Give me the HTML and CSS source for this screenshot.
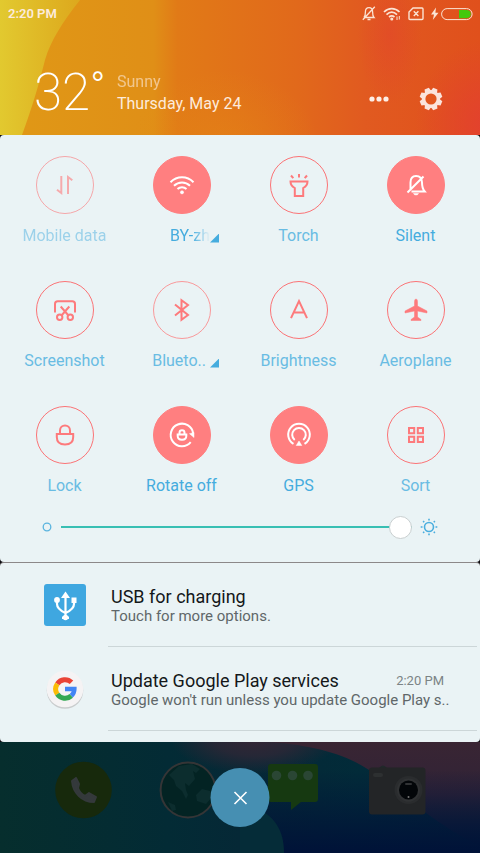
FILE: index.html
```html
<!DOCTYPE html>
<html lang="en">
<head>
<meta charset="utf-8">
<meta name="viewport" content="width=device-width, initial-scale=1">
<title>Notification shade</title>
<link rel="stylesheet" href="styles.css">
</head>
<body>
<div class="shade">
  <header class="header">
    <svg class="wallpaper" viewBox="0 0 480 135" preserveAspectRatio="none" aria-hidden="true">
      <defs>
        <linearGradient id="warm" x1="0" y1="0" x2="1" y2="0">
          <stop offset="0" stop-color="#e09916"/><stop offset=".32" stop-color="#e08f17"/>
          <stop offset=".37" stop-color="#e17a17"/><stop offset=".62" stop-color="#e1691b"/>
          <stop offset=".76" stop-color="#e15a20"/><stop offset="1" stop-color="#e0501c"/>
        </linearGradient>
        <linearGradient id="sunny" x1="0" y1="0" x2="1" y2="0">
          <stop offset="0" stop-color="#e2c92f"/><stop offset="1" stop-color="#dda81d"/>
        </linearGradient>
        <radialGradient id="ember"><stop offset="0" stop-color="#e3402f"/><stop offset="1" stop-color="#e3402f" stop-opacity="0"/></radialGradient>
        <radialGradient id="glow"><stop offset="0" stop-color="#e58a15" stop-opacity=".5"/><stop offset="1" stop-color="#e58a15" stop-opacity="0"/></radialGradient>
      </defs>
      <rect width="480" height="135" fill="url(#warm)"/>
      <ellipse cx="225" cy="150" rx="95" ry="80" fill="url(#glow)"/>
      <ellipse cx="490" cy="125" rx="75" ry="85" fill="url(#ember)"/>
      <ellipse cx="390" cy="35" rx="32" ry="70" fill="url(#ember)" opacity=".45"/>
      <path d="M0 0H80C62 23 51 40 45 60C39 84 32 108 22 135H0Z" fill="url(#sunny)"/>
    </svg>
    <div class="status">
      <span>2:20 PM</span>
      <div class="status-icons">
        <svg width="14" height="15" viewBox="0 0 14 15" fill="none" stroke="#fbe3d3" stroke-width="1.3" aria-hidden="true"><path d="M2.500 11.500H12C10.800 10.300 10.600 9 10.600 6C10.600 3.500 9.200 1.600 7 1.600S3.400 3.500 3.400 6C3.400 9 3.300 10 2 11.500M5.500 13.500H8.500M12.800 .800L.800 13.800"/></svg>
        <svg width="18" height="14" viewBox="0 0 18 14" fill="none" stroke="#fbe3d3" stroke-width="1.700" aria-hidden="true"><path d="M1 5C5.500 .600 12 .600 16.500 5M3.500 7.600C7 4.400 10.500 4.400 14 7.600M6 10C8 8.400 9.600 8.400 11.500 10"/><circle cx="8.800" cy="12" r=".7"/><path d="M14 9.500V13M16.300 9V12.500" stroke-width="1"/></svg>
        <svg width="16" height="14" viewBox="0 0 16 14" fill="none" stroke="#fbe3d3" stroke-width="1.400" aria-hidden="true"><path d="M5 1H14Q15 1 15 2V11.500Q15 12.500 14 12.500H2Q1 12.500 1 11.500V5ZM5.800 4.300L10.400 9M10.400 4.300L5.800 9"/></svg>
        <svg width="42" height="14" viewBox="-1 0 42 14" aria-hidden="true"><path d="M4 .500L-1 7.500H2L.800 13L6.500 5.800H3.400Z" fill="#fbe3d3"/><rect x="9.600" y="1.600" width="30.500" height="11" rx="5.500" fill="none" stroke="#fbe3d3"/><path d="M27 3H34.500Q38.800 3.200 38.800 7T34.500 11.200H27Z" fill="#44c80c"/></svg>
      </div>
    </div>
    <div class="weather">
      <div class="temperature">32<span class="degree">°</span></div>
      <div class="day"><p class="sky">Sunny</p><p>Thursday, May 24</p></div>
      <div class="actions">
        <button class="icon-button" aria-label="More"><svg width="20" height="6" viewBox="0 0 20 6" fill="#fdeee6"><circle cx="3" cy="3" r="2.600"/><circle cx="10" cy="3" r="2.600"/><circle cx="17" cy="3" r="2.600"/></svg></button>
        <button class="icon-button" aria-label="Settings"><svg width="24" height="24" viewBox="-12 -12 24 24"><g fill="#fbe3dc"><circle r="9"/><path id="tooth" d="M-3.200 -8L-2.300 -11.300H2.300L3.200 -8V8L2.300 11.300H-2.300L-3.200 8Z" transform="rotate(22.500)"/><use href="#tooth" transform="rotate(45)"/><use href="#tooth" transform="rotate(90)"/><use href="#tooth" transform="rotate(135)"/></g><circle r="5.600" fill="#e2561f"/></svg></button>
      </div>
    </div>
  </header>

  <main>
    <section class="panel controls" aria-label="Quick settings">
      <div class="tiles">
        <button class="tile disabled"><span class="disc"><svg viewBox="-16 -16 32 32"><path d="M-3.700 -9V8L-8 4.700M3 9V-8L7.300 -4.700"/></svg></span><span class="label">Mobile data</span></button>
        <button class="tile on"><span class="disc"><svg viewBox="-16 -16 32 32"><path d="M-11.500 -2.700C-5 -9.300 5 -9.300 11.500 -2.700M-8 .800C-3.500 -3.700 3.500 -3.700 8 .800M-4.500 4C-2 1.600 2 1.600 4.500 4"/><circle cy="7.300" r="1.600" class="solid thin"/></svg></span><span class="label expands cut"><span class="fade">BY-zh</span><i class="corner"></i></span></button>
        <button class="tile"><span class="disc"><svg viewBox="-16 -16 32 32"><path d="M-8.500 -3.500H8.500C8.500 0 6 2 4.200 3V11H-4.200V3C-6 2-8.500 0-8.500 -3.500ZM0 -11V-7.500M-8 -9.500L-5.700 -6.800M8 -9.500L5.700 -6.800"/></svg></span><span class="label">Torch</span></button>
        <button class="tile on"><span class="disc"><svg viewBox="-16 -16 32 32"><path d="M-5.500 4V-2.500C-5.500 -6.500 -3.500 -9 0 -9C4 -9 6 -6.500 6 -2.500C6 2 6.500 4 8.700 6.500H-4.500M7.500 -8.500L-8.500 7.500"/><path class="solid thin" d="M-2.500 8.500H2.500Q2 10 0 10T-2.500 8.500Z"/></svg></span><span class="label">Silent</span></button>

        <button class="tile"><span class="disc"><svg viewBox="-16 -16 32 32"><path d="M-10 2.500V-6Q-10 -8.700 -7.300 -8.700H7.300Q10 -8.700 10 -6V2.500M-4.300 -3.500L3.500 5.500M4.300 -3.500L-3.500 5.500"/><circle cx="-5.300" cy="7.200" r="2.700"/><circle cx="5.300" cy="7.200" r="2.700"/></svg></span><span class="label">Screenshot</span></button>
        <button class="tile soft"><span class="disc"><svg viewBox="-16 -16 32 32"><path d="M-7 -5.500L6 5L-.500 9.700V-9.700L6 -5L-7 5.500"/></svg></span><span class="label expands"><span>Blueto..</span><i class="corner"></i></span></button>
        <button class="tile"><span class="disc"><svg viewBox="-16 -16 32 32"><path d="M-8 8.200L0 -9L8 8.200M-5.700 2.500H5.700"/></svg></span><span class="label">Brightness</span></button>
        <button class="tile"><span class="disc"><svg viewBox="-16 -16 32 32"><path class="solid thin" d="M0 -11Q1.500 -11 1.500 -8.500V-4L11 1V3L1.500 1V7L5 9.500V10.500H-5V9.500L-1.500 7V1L-11 3V1L-1.500 -4V-8.500Q-1.500 -11 0 -11Z"/></svg></span><span class="label">Aeroplane</span></button>

        <button class="tile"><span class="disc"><svg viewBox="-16 -16 32 32"><path d="M-8.200 -1H8.200V2C8.200 7 5 9.500 0 9.500S-8.200 7 -8.200 2ZM-5 -1V-4.500C-5 -11.200 5 -11.200 5 -4.500V-1"/></svg></span><span class="label">Lock</span></button>
        <button class="tile on"><span class="disc"><svg viewBox="-16 -16 32 32"><path d="M8.700 7.200A11.300 11.300 0 1 1 11.200 -1.500M-4.300 -.5H4.300V1C4.300 3.500 2.500 4.700 0 4.700S-4.300 3.500 -4.300 1ZM-2.500 -.5V-2.300C-2.500 -5.500 2.500 -5.500 2.500 -2.300V-.5"/><path class="solid thin" d="M7.500 -1.300L12 2.500V-2.500Z"/></svg></span><span class="label">Rotate off</span></button>
        <button class="tile on"><span class="disc"><svg viewBox="-16 -16 32 32"><path d="M-5.500 8.800A10.800 10.800 0 1 1 5.500 8.800M-4.300 5A6.800 6.800 0 1 1 4.300 5"/><path class="solid thin" d="M0 6L2.800 10.500H-2.800Z"/></svg></span><span class="label">GPS</span></button>
        <button class="tile"><span class="disc"><svg viewBox="-16 -16 32 32"><path d="M-7 -7H-1.800V-1.800H-7ZM1.800 -7H7V-1.800H1.800ZM-7 1.800H-1.800V7H-7ZM1.800 1.800H7V7H1.800Z"/></svg></span><span class="label">Sort</span></button>
      </div>
      <div class="brightness">
        <svg width="10" height="10" viewBox="0 0 10 10" fill="none" stroke="#5ab4df" stroke-width="1.300" aria-hidden="true"><circle cx="5" cy="5" r="3.800"/></svg>
        <input type="range" min="0" max="100" value="100" aria-label="Screen brightness">
        <svg width="18" height="18" viewBox="-9 -9 18 18" fill="none" stroke="#4aaede" stroke-width="1.600" aria-hidden="true"><circle r="4.500"/><path d="M0 -8.300V-6.500M0 8.300V6.500M-8.300 0H-6.500M8.300 0H6.500M-5.900 -5.900L-4.800 -4.800M5.900 5.900L4.800 4.800M-5.900 5.900L-4.800 4.800M5.900 -5.900L4.800 -4.800"/></svg>
      </div>
    </section>

    <section class="panel notifications" aria-label="Notifications">
      <article class="note">
        <svg class="note-icon" viewBox="0 0 44 44" aria-hidden="true"><rect x="1" y="1" width="42" height="42" rx="3" fill="#3fa7e0"/><g fill="none" stroke="#fff" stroke-width="2.200"><path d="M22.500 12V34M14 17V21C14 25 17 27.500 22.500 30C28 27.500 31 25 31 21V17"/></g><g fill="#fff"><path d="M22.500 8.500L27 15H18Z"/><circle cx="14" cy="17" r="2.900"/><path d="M28.500 14.500H33.500V20H28.500ZM19 33.500H26V36H19Z"/><circle cx="22.500" cy="34.500" r="2.700"/></g></svg>
        <div class="note-body"><div class="note-head"><h2>USB for charging</h2></div><p>Touch for more options.</p></div>
      </article>
      <article class="note">
        <svg class="note-icon" viewBox="0 0 44 44" aria-hidden="true"><circle cx="22" cy="23.500" r="18.300" fill="#c9cccd"/><circle cx="22" cy="22" r="18.300" fill="#f5f3f4"/><g transform="translate(22 22)" fill="none" stroke-width="5"><path d="M-7.700 -5.200A9.300 9.300 0 0 1 6.500 -6.700" stroke="#ea4335"/><path d="M-7.700 5.200A9.300 9.300 0 0 1 -7.700 -5.200" stroke="#fbbc05"/><path d="M6.300 6.800A9.300 9.300 0 0 1 -7.700 5.200" stroke="#34a853"/><path d="M0 0H9.300A9.300 9.300 0 0 1 6.300 6.800" stroke="#4285f4" stroke-width="4.600"/></g></svg>
        <div class="note-body"><div class="note-head"><h2>Update Google Play services</h2><time>2:20 PM</time></div><p>Google won't run unless you update Google Play s..</p></div>
      </article>
    </section>
  </main>

  <footer class="dock">
    <svg class="wallpaper" viewBox="0 0 480 111" preserveAspectRatio="none" aria-hidden="true">
      <defs>
        <linearGradient id="deep" x1="0" y1="0" x2="1" y2="0"><stop offset="0" stop-color="#062e2d"/><stop offset=".35" stop-color="#032b35"/><stop offset=".5" stop-color="#052836"/><stop offset=".75" stop-color="#022b39"/><stop offset="1" stop-color="#06263b"/></linearGradient>
        <linearGradient id="plum" x1="0" y1="0" x2="0" y2="1"><stop offset="0" stop-color="#392533"/><stop offset=".5" stop-color="#302337"/><stop offset="1" stop-color="#082239"/></linearGradient>
        <linearGradient id="night" x1="0" y1="0" x2="0" y2="1"><stop offset=".25" stop-color="#001338" stop-opacity="0"/><stop offset="1" stop-color="#001238"/></linearGradient>
        <radialGradient id="haze"><stop offset="0" stop-color="#352635"/><stop offset=".5" stop-color="#2e2736" stop-opacity=".8"/><stop offset="1" stop-color="#2e2736" stop-opacity="0"/></radialGradient>
      </defs>
      <rect width="480" height="111" fill="url(#deep)"/>
      <ellipse cx="255" cy="-4" rx="85" ry="36" fill="url(#haze)"/>
      <path d="M270 0C320 4 350 14 375 32C410 58 440 85 480 104V0Z" fill="url(#plum)"/>
      <path d="M240 0H480V111H240Z" fill="url(#night)"/>
      <path d="M240 60C270 68 284 83 284 111H240Z" fill="#052c38"/>
    </svg>
    <nav class="apps" aria-label="Apps">
      <svg viewBox="0 0 58 58" role="img" aria-label="Phone"><circle cx="29.500" cy="29" r="28.300" fill="#17290c"/><path d="M18 20C19 32 28 41 40 41L42 36L35 32L31 35C27 33 25 30 24 27L25 23L22 17Z" fill="#34393b" stroke="#34393b" stroke-width="2" stroke-linejoin="round"/></svg>
      <svg viewBox="0 0 58 58" role="img" aria-label="Browser"><circle cx="29" cy="29" r="27.400" fill="#032323" stroke="#353536" stroke-width="2"/><path d="M10 14L20 5L33 3L41 8L37 12L34 10L36 18L30 25L26 22L27 29L29 34L27 38L23 30L17 25L15 19ZM37 34L43 28L51 30L53 36L47 43L38 40ZM9 41L16 44L17 49L13 50Z" fill="#0c2d2e"/></svg>
      <svg viewBox="0 0 58 58" role="img" aria-label="Messages"><path d="M7 3H51Q54 3 54 6V38Q54 41 51 41H37L27 49V41H7Q4 41 4 38V6Q4 3 7 3Z" fill="#163911"/><g fill="#2a4634"><circle cx="12.500" cy="14.500" r="4.800"/><circle cx="28.500" cy="14.500" r="4.800"/><circle cx="44" cy="14.500" r="4.800"/></g></svg>
      <svg viewBox="0 0 58 58" role="img" aria-label="Camera"><path d="M10 7Q14 2 18 7Z" fill="#20292a"/><rect x="0" y="6.500" width="56.500" height="47" rx="3" fill="#232527"/><rect x="4" y="12" width="10" height="4" rx="2" fill="#2d3031"/><circle cx="39.500" cy="29" r="14" fill="#2a2c2e"/><circle cx="39.500" cy="29" r="11.500" fill="#303234"/><circle cx="39.500" cy="29" r="9.500" fill="#030609"/><rect x="36" y="22" width="7" height="2" rx="1" fill="#303234"/><circle cx="39.500" cy="36" r="1" fill="#777"/></svg>
    </nav>
    <button class="close" aria-label="Close"><svg width="14" height="14" viewBox="0 0 14 14" fill="none" stroke="#fff" stroke-width="1.600"><path d="M1 1L13 13M13 1L1 13"/></svg></button>
  </footer>
</div>
</body>
</html>
```

FILE: styles.css
```css
* { box-sizing: border-box; }

body {
  margin: 0;
  background: #0c0b0f;
  font-family: Roboto, "Liberation Sans", sans-serif;
}

h2, p { margin: 0; font-weight: 400; }

button {
  padding: 0;
  border: 0;
  background: none;
  font: inherit;
  color: inherit;
}

svg { display: block; }

.shade {
  display: flex;
  flex-direction: column;
  min-height: 100vh;
}

.wallpaper {
  position: absolute;
  inset: 0;
  z-index: -1;
  width: 100%;
  height: 100%;
}

.header {
  position: relative;
  isolation: isolate;
  padding-bottom: 6px;
  color: #fdebdc;
}

.status {
  display: flex;
  align-items: center;
  justify-content: space-between;
  height: 27px;
  padding: 0 7px 0 8px;
  font-size: 13px;
  font-weight: 600;
}

.status-icons { display: flex; align-items: center; gap: 7px; }

.weather {
  display: flex;
  align-items: center;
  height: 102px;
  padding: 30px 32px 0 34px;
}

.temperature {
  display: flex;
  width: 83px;
  font-size: 51px;
  font-weight: 200;
  line-height: 60px;
  color: #fff;
}

.degree { font-weight: 300; font-size: 40px; line-height: 50px; }

.day { flex: 1; font-size: 16px; line-height: 22px; }
.sky { opacity: .6; }

.actions { display: flex; gap: 9px; padding-top: 12px; }

.icon-button {
  display: grid;
  place-items: center;
  width: 52px;
  height: 40px;
}
.icon-button:last-child { width: 34px; }

main { display: flex; flex-direction: column; }

.panel {
  border-radius: 4px;
  background: #eaf3f5;
}

.controls { padding-bottom: 23px; }

.tiles {
  display: grid;
  grid-template-columns: repeat(4, 1fr);
  row-gap: 34px;
  padding: 21px 6px 0;
}

.tile {
  display: flex;
  flex-direction: column;
  align-items: center;
  gap: 11px;
  min-width: 0;
  font-size: 16px;
  line-height: 22px;
  color: #69bce3;
}

.disc {
  display: grid;
  place-items: center;
  width: 58px;
  height: 58px;
  border: 1px solid #fb7376;
  border-radius: 50%;
  color: #fd7a7c;
}

.disc svg {
  width: 32px;
  height: 32px;
  fill: none;
  stroke: currentColor;
  stroke-width: 2;
}

.disc .solid { fill: currentColor; }
.disc .thin { stroke-width: .5; }

.on { color: #45acde; }
.on .disc { background: #ff7f80; border-color: #ff7f80; color: #fff; }
.soft .disc { border-color: #f9999b; }
.disabled { opacity: .6; }

.expands {
  display: flex;
  align-items: center;
  justify-content: flex-end;
  gap: 4px;
  align-self: stretch;
  padding-right: 21px;
}

.cut { gap: 0; }

.fade {
  mask-image: linear-gradient(to right, #000 55%, transparent);
}

.corner {
  width: 9px;
  height: 9px;
  margin-top: 4px;
  background: #45acde;
  clip-path: polygon(100% 0, 100% 100%, 0 100%);
}

.brightness {
  display: flex;
  align-items: center;
  gap: 8px;
  padding: 18px 42px 0;
}

.brightness input {
  flex: 1;
  min-width: 0;
  height: 24px;
  margin: 0 0 0 1px;
  appearance: none;
  background: linear-gradient(#38bfb3, #38bfb3) center / 100% 2px no-repeat;
}

.brightness input::-webkit-slider-thumb {
  appearance: none;
  width: 23px;
  height: 23px;
  border: 1px solid #c9cfd0;
  border-radius: 50%;
  background: #fff;
}

.notifications {
  padding-bottom: 11px;
  border-top: 1px solid #8c8889;
}

.note {
  display: flex;
  height: 84px;
  padding-left: 43px;
}

.note-icon { flex: none; width: 44px; height: 44px; margin-top: 20px; }

.note-body {
  flex: 1;
  min-width: 0;
  margin: 0 3px 0 21px;
  padding: 23px 24px 0 3px;
  border-bottom: 1px solid #ccd6d8;
}

.note-head {
  display: flex;
  align-items: center;
  justify-content: space-between;
  padding-right: 9px;
}

.note h2 { font-size: 18px; line-height: 21px; color: #14181a; }
.note time { font-size: 13px; color: #7b8385; }

.note p {
  overflow: hidden;
  font-size: 15px;
  line-height: 18px;
  white-space: nowrap;
  color: #606769;
}

.dock {
  position: relative;
  isolation: isolate;
  flex: 1;
  min-height: 111px;
}

.apps {
  display: grid;
  grid-template-columns: repeat(4, 1fr);
  justify-items: center;
  padding: 19px 30px 0;
}

.apps svg { width: 58px; height: 58px; }

.close {
  position: absolute;
  top: 26px;
  left: 50%;
  display: grid;
  place-items: center;
  width: 59px;
  height: 59px;
  border-radius: 50%;
  background: #468fb2;
  transform: translateX(-50%);
}
```
